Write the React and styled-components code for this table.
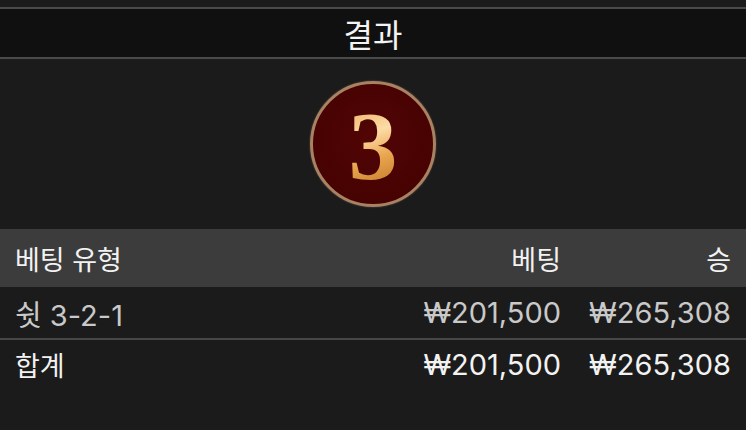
import React from "react";
import styled, { createGlobalStyle } from "styled-components";

const Global = createGlobalStyle`
  html, body { margin: 0; padding: 0; background: #1b1b1b; }
  body { font-family: Inter, "Noto Sans CJK KR", sans-serif; }
`;

const Page = styled.div`
  width: 746px;
  height: 430px;
  background: #1b1b1b;
  padding-top: 7px;
  box-sizing: border-box;
  overflow: hidden;
`;

const TitleBar = styled.div`
  height: 48px;
  border-top: 2px solid #4a4a4a;
  border-bottom: 2px solid #4a4a4a;
  background: #101010;
  display: flex;
  align-items: center;
  justify-content: center;
  color: #f4f4f4;
  font-family: "Noto Sans CJK KR", sans-serif;
  font-size: 32px;
  font-weight: 400;
`;

const ResultArea = styled.div`
  height: 170px;
  display: flex;
  align-items: center;
  justify-content: center;
`;

const Ball = styled.div`
  width: 120px;
  height: 120px;
  border-radius: 50%;
  border: 3px solid #a88262;
  background: radial-gradient(circle at 50% 45%, #520505 0%, #470202 70%, #3e0101 100%);
  box-shadow: 0 0 2px rgba(168, 130, 98, 0.6);
  display: flex;
  align-items: center;
  justify-content: center;
`;

const Digit = styled.span`
  font-family: "Liberation Serif", "DejaVu Serif", serif;
  font-weight: 700;
  font-size: 98px;
  line-height: 1;
  margin-top: 4px;
  background: linear-gradient(160deg, #eaa752 0%, #fcdca6 38%, #e9a44e 62%, #b8701f 100%);
  -webkit-background-clip: text;
  background-clip: text;
  color: transparent;
`;

const Row = styled.div`
  display: grid;
  grid-template-columns: 1fr 160px 170px;
  align-items: center;
  height: ${(p) => p.$h}px;
  padding: 0 15px;
  background: ${(p) => p.$bg || "transparent"};
  color: ${(p) => p.$color};
  border-bottom: ${(p) => (p.$line ? "2px solid #474747" : "none")};
`;

const Cell = styled.div`
  text-align: ${(p) => (p.$right ? "right" : "left")};
  white-space: nowrap;
  font-size: ${(p) => (p.$num ? "29px" : "27px")};
`;

export default function App() {
  return (
    <Page>
      <Global />
      <TitleBar>결과</TitleBar>
      <ResultArea>
        <Ball>
          <Digit>3</Digit>
        </Ball>
      </ResultArea>
      <Row $h={58} $bg="#3c3c3c" $color="#f2f2f2">
        <Cell>베팅 유형</Cell>
        <Cell $right>베팅</Cell>
        <Cell $right>승</Cell>
      </Row>
      <Row $h={51} $color="#c9c9c9" $line>
        <Cell $num>쉿 3-2-1</Cell>
        <Cell $right $num>₩201,500</Cell>
        <Cell $right $num>₩265,308</Cell>
      </Row>
      <Row $h={48} $color="#f2f2f2">
        <Cell>합계</Cell>
        <Cell $right $num>₩201,500</Cell>
        <Cell $right $num>₩265,308</Cell>
      </Row>
    </Page>
  );
}
